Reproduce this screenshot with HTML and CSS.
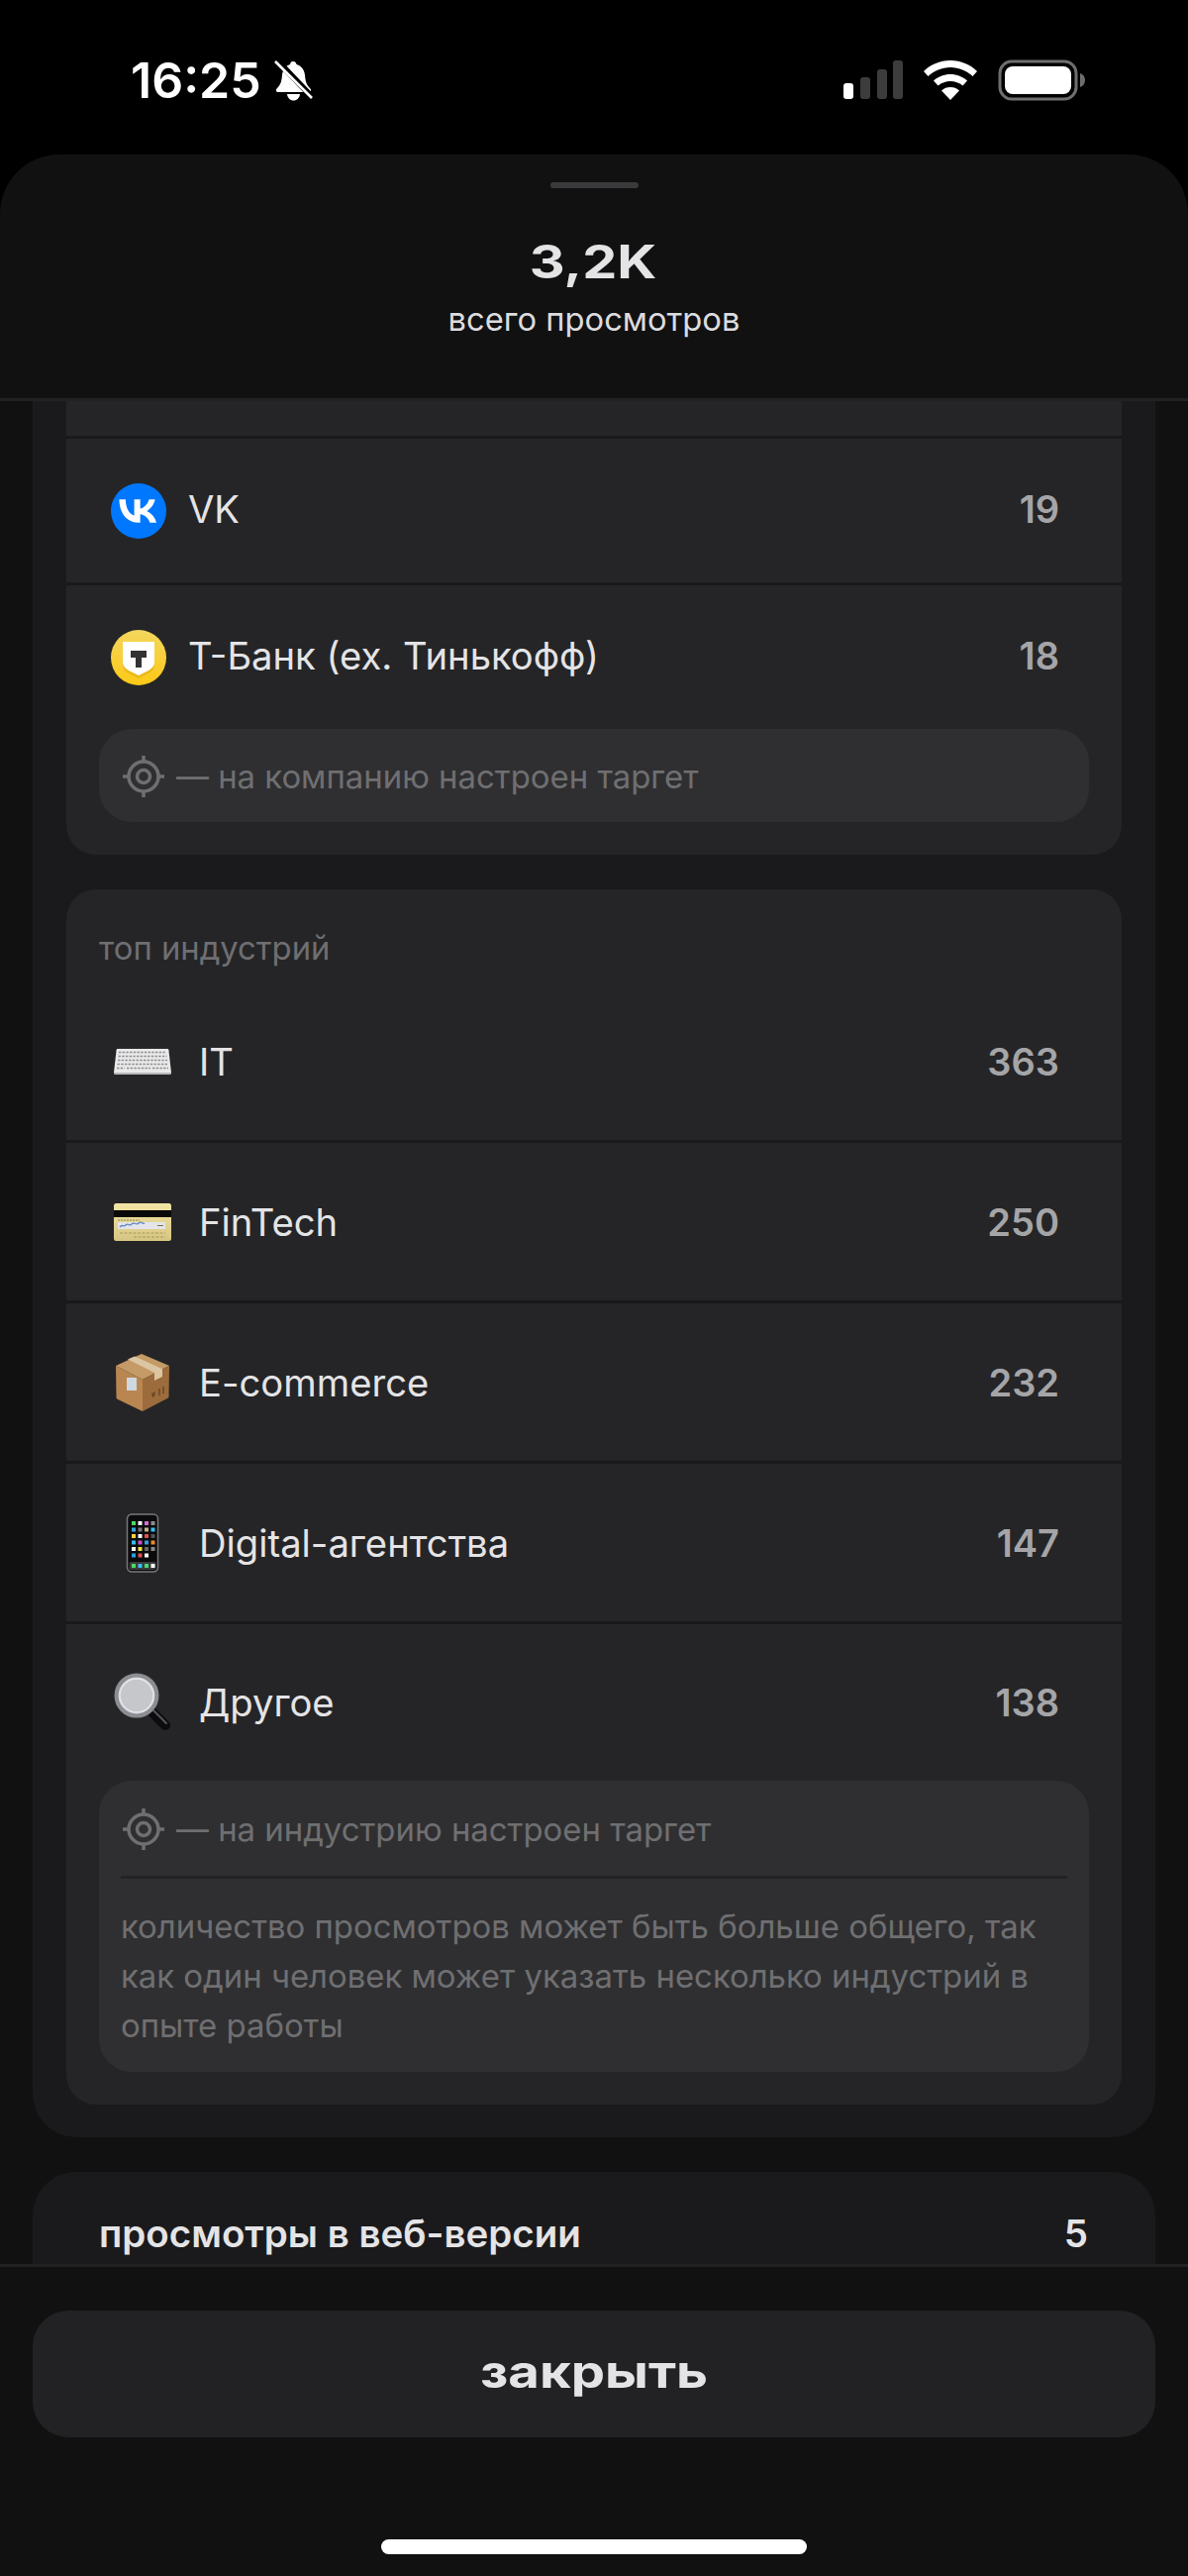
FILE: index.html
```html
<!DOCTYPE html>
<html lang="ru">
<head>
<meta charset="utf-8">
<title>просмотры</title>
<link rel="stylesheet" href="styles.css">
</head>
<body>

<div class="status">
  <div class="status-time">16:25</div>
  <svg class="bell" viewBox="0 0 40 44">
    <path fill="#fff" d="M19 2c2 0 3 1 3.500 3 5 1.500 8 5.500 8.500 11 .5 5 1 9 5 13 2 2 1 4-1 4H4c-2 0-3-2-1-4 4-4 4.500-8 5-13 .5-5.500 3.500-9.500 8-11 .5-2 1-3 3-3z"/>
    <path fill="#fff" d="M13 35h13c-.5 4-3 6.500-6.500 6.500S13.500 39 13 35z"/>
    <path stroke="#000" stroke-width="6" d="M1 -1L41 41"/>
    <path stroke="#fff" stroke-width="2.600" d="M1 2L38 39"/>
  </svg>
  <div class="status-right">
    <svg class="signal" viewBox="0 0 60 40">
      <rect x="0" y="23" width="10" height="16" rx="3" fill="#fff"/>
      <rect x="17" y="17" width="10" height="22" rx="3" fill="#3c3c3c"/>
      <rect x="34" y="9" width="10" height="30" rx="3" fill="#3c3c3c"/>
      <rect x="50" y="0" width="10" height="39" rx="3" fill="#3c3c3c"/>
    </svg>
    <svg class="wifi" viewBox="0 0 54 40">
      <path fill="#fff" d="M27 0c10.500 0 20 4 27 11l-4.500 5C43.500 10.500 35.500 7 27 7S10.500 10.500 4.500 16L0 11C7 4 16.500 0 27 0z"/>
      <path fill="#fff" d="M27 14c6.500 0 12.500 2.500 17 6.500l-4.500 5C36 22.500 31.500 21 27 21s-9 1.500-12.500 4.500L10 20.500C14.500 16.500 20.500 14 27 14z"/>
      <path fill="#fff" d="M27 27c3.500 0 6.500 1 9 3.500L27 40l-9-9.500c2.500-2.500 5.500-3.500 9-3.500z"/>
    </svg>
    <svg class="battery" viewBox="0 0 88 42">
      <rect x="2" y="2" width="77" height="38" rx="12" fill="none" stroke="#6e6e6e" stroke-width="3"/>
      <rect x="7" y="7" width="67" height="28" rx="8" fill="#fff"/>
      <path fill="#6e6e6e" d="M83 14c3 1 5 3.500 5 7s-2 6-5 7z"/>
    </svg>
  </div>
</div>

<div class="sheet">
  <div class="sheet-head">
    <div class="handle"></div>
    <div class="total"><span class="wide">3,2K</span></div>
    <div class="total-sub">всего просмотров</div>
  </div>

  <div class="sheet-scroll">
    <div class="outer-card">

      <div class="inner-card inner-card-cut">
        <div class="row-stub"></div>

        <div class="row">
          <svg class="logo" viewBox="0 0 56 56">
            <circle cx="28" cy="28" r="28" fill="#0077ff"/>
            <path fill="#fff" transform="translate(-1.100 -.9) scale(2.350)" d="M12.770 17.290c-5.470 0-8.590-3.750-8.720-9.990h2.740c.09 4.580 2.110 6.520 3.710 6.920V7.300h2.580v3.950c1.580-.17 3.240-1.970 3.800-3.950h2.580a7.620 7.620 0 0 1-3.510 4.980 7.900 7.900 0 0 1 4.110 5.010h-2.840c-.61-1.900-2.130-3.370-4.140-3.570v3.570h-.31z"/>
          </svg>
          <div class="row-name">VK</div>
          <div class="row-count">19</div>
        </div>

        <div class="row row-last">
          <svg class="logo" viewBox="0 0 56 56">
            <defs>
              <linearGradient id="tbank" x1="0" y1="0" x2="0" y2="1">
                <stop offset="0" stop-color="#f3d65e"/>
                <stop offset="1" stop-color="#fdc915"/>
              </linearGradient>
            </defs>
            <circle cx="28" cy="28" r="28" fill="url(#tbank)"/>
            <path fill="#d9a70c" d="M12 15h32v20c0 5-3 7-6 9l-10 5-10-5c-3-2-6-4-6-9z" opacity=".5"/>
            <path fill="#fff" d="M12 12h32v20c0 5-3 7-6 9l-10 5-10-5c-3-2-6-4-6-9z"/>
            <path fill="#333" d="M20 21h16v7h-5v10h-6V28h-5z"/>
          </svg>
          <div class="row-name">Т-Банк (ех. Тинькофф)</div>
          <div class="row-count">18</div>
        </div>

        <div class="note">
          <div class="note-row">
            <svg class="target" viewBox="0 0 42 42">
              <circle cx="21" cy="21" r="15" fill="none" stroke="#6f6f72" stroke-width="3.500"/>
              <circle cx="21" cy="21" r="6.500" fill="none" stroke="#6f6f72" stroke-width="3.500"/>
              <path stroke="#6f6f72" stroke-width="3.500" d="M21 0v7M21 35v7M0 21h7M35 21h7"/>
            </svg>
            <span>— на компанию настроен таргет</span>
          </div>
        </div>
      </div>

      <div class="inner-card">
        <div class="card-label">топ индустрий</div>

        <div class="row row-ind">
          <svg class="emoji" viewBox="0 0 58 60">
            <path fill="#e9e9ea" d="M4 17h50c.8 0 1.200.5 1.400 1.200L58 41c.1 1-.5 1.800-1.500 1.800h-55C.5 42.800-.1 42 0 41l2.600-22.800c.2-.7.600-1.200 1.400-1.200z"/>
            <path fill="none" stroke="#8d8d90" stroke-width="1.300" stroke-dasharray="2.400 1.300" d="M5 20.500h48M4.500 24.500h49M4 28.500h50M3.500 32.500h51M3 36.500h8M13 36.500h24M39 36.500h16"/>
            <path stroke="#b5b5b7" stroke-width="1.200" d="M0 41.500h58"/>
          </svg>
          <div class="row-name">IT</div>
          <div class="row-count">363</div>
        </div>

        <div class="row row-ind">
          <svg class="emoji" viewBox="0 0 58 60">
            <defs>
              <linearGradient id="card" x1="0" y1="0" x2="0" y2="1">
                <stop offset="0" stop-color="#f2e6a4"/>
                <stop offset="1" stop-color="#d6c582"/>
              </linearGradient>
            </defs>
            <rect x="0" y="11" width="58" height="38" rx="2.500" fill="url(#card)"/>
            <rect x="0" y="18" width="58" height="7" fill="#0a0a0a"/>
            <rect x="4" y="30" width="48" height="7" fill="#e4e4ea"/>
            <path fill="none" stroke="#5d88c4" stroke-width="1.300" d="M6 35c3-4 3 1 6-2s3 2 6-1 4 2 7-1 4 2 6 0"/>
            <path stroke="#7c7344" stroke-width="1" d="M44 33.500h6"/>
            <path stroke="#a99a5c" stroke-width="1.200" stroke-dasharray="3 1.500" d="M6 41h46M20 45h32"/>
            <path stroke="#7c7344" stroke-width=".800" stroke-dasharray="2 1" d="M4 28h22"/>
          </svg>
          <div class="row-name">FinTech</div>
          <div class="row-count">250</div>
        </div>

        <div class="row row-ind">
          <svg class="emoji" viewBox="0 0 58 60">
            <path fill="#c49a66" d="M28 1L56 13 29 27 2 13z"/>
            <path fill="#b98651" d="M2 13l27 14v32L4 47c-1-.5-1.500-1-1.500-2z"/>
            <path fill="#9c6c3c" d="M56 13L29 27v32l25-13c1-.5 1.500-1 1.500-2z"/>
            <path fill="#dcc5a2" d="M14 6.500l7-3 28 12.800v7.700l-8 4v-8z"/>
            <rect x="13" y="25" width="10" height="13" fill="#cfd8e0" transform="skewY(27 18 31)"/>
            <path stroke="#6d4826" stroke-width="1.500" d="M46 36v7M50 34v7"/>
            <path fill="#6d4826" d="M38 41l4-2-1 5-2 1z"/>
          </svg>
          <div class="row-name">E-commerce</div>
          <div class="row-count">232</div>
        </div>

        <div class="row row-ind">
          <svg class="emoji" viewBox="0 0 58 60">
            <rect x="13.500" y="1" width="31" height="58" rx="4.500" fill="#0b0b0c" stroke="#77787c" stroke-width="1.500"/>
            <g class="apps">
              <rect x="18" y="8" width="4" height="4" fill="#4cd964"/><rect x="24.500" y="8" width="4" height="4" fill="#fff"/><rect x="31" y="8" width="4" height="4" fill="#d66bd8"/><rect x="37.500" y="8" width="4" height="4" fill="#8e8e8e"/>
              <rect x="18" y="14.500" width="4" height="4" fill="#35a8e0"/><rect x="24.500" y="14.500" width="4" height="4" fill="#777"/><rect x="31" y="14.500" width="4" height="4" fill="#c9b48a"/><rect x="37.500" y="14.500" width="4" height="4" fill="#34c0f0"/>
              <rect x="18" y="21" width="4" height="4" fill="#f7d038"/><rect x="24.500" y="21" width="4" height="4" fill="#fff"/><rect x="31" y="21" width="4" height="4" fill="#e0504f"/><rect x="37.500" y="21" width="4" height="4" fill="#555"/>
              <rect x="18" y="27.500" width="4" height="4" fill="#34c0f0"/><rect x="24.500" y="27.500" width="4" height="4" fill="#c94fd0"/><rect x="31" y="27.500" width="4" height="4" fill="#2ea0e0"/><rect x="37.500" y="27.500" width="4" height="4" fill="#f08a24"/>
              <rect x="18" y="34" width="4" height="4" fill="#fff"/><rect x="24.500" y="34" width="4" height="4" fill="#f2e13a"/><rect x="31" y="34" width="4" height="4" fill="#666"/><rect x="37.500" y="34" width="4" height="4" fill="#888"/>
              <rect x="18" y="40.500" width="4" height="4" fill="#2a9fe0"/><rect x="24.500" y="40.500" width="4" height="4" fill="#e0504f"/><rect x="31" y="40.500" width="4" height="4" fill="#fff"/>
            </g>
            <rect x="15.500" y="49" width="27" height="8" rx="1.500" fill="#3a3b3e"/>
            <rect x="18" y="51" width="4" height="4" fill="#4cd964"/><rect x="24.500" y="51" width="4" height="4" fill="#34c0f0"/><rect x="31" y="51" width="4" height="4" fill="#4cd964"/><rect x="37.500" y="51" width="4" height="4" fill="#fff"/>
          </svg>
          <div class="row-name">Digital-агентства</div>
          <div class="row-count">147</div>
        </div>

        <div class="row row-ind row-last">
          <svg class="emoji" viewBox="0 0 58 60">
            <path stroke="#0c0c0e" stroke-width="10" stroke-linecap="round" d="M38 39L52 53"/>
            <path stroke="#55565a" stroke-width="2" stroke-linecap="round" d="M40 38L53 51"/>
            <path stroke="#77787c" stroke-width="5" d="M33 34L38 39"/>
            <circle cx="23" cy="23" r="20.500" fill="#c6c7cb" stroke="#8b8d92" stroke-width="4"/>
            <circle cx="23" cy="23" r="17" fill="none" stroke="#e6e7ea" stroke-width="1.500"/>
          </svg>
          <div class="row-name">Другое</div>
          <div class="row-count">138</div>
        </div>

        <div class="note note-tall">
          <div class="note-row">
            <svg class="target" viewBox="0 0 42 42">
              <circle cx="21" cy="21" r="15" fill="none" stroke="#6f6f72" stroke-width="3.500"/>
              <circle cx="21" cy="21" r="6.500" fill="none" stroke="#6f6f72" stroke-width="3.500"/>
              <path stroke="#6f6f72" stroke-width="3.500" d="M21 0v7M21 35v7M0 21h7M35 21h7"/>
            </svg>
            <span>— на индустрию настроен таргет</span>
          </div>
          <div class="note-text">количество просмотров может быть больше общего, так как один человек может указать несколько индустрий в опыте работы</div>
        </div>
      </div>
    </div>

    <div class="web-card">
      <div class="web-name">просмотры в веб-версии</div>
      <div class="web-count">5</div>
    </div>
  </div>

  <div class="sheet-foot">
    <div class="close-btn"><span class="wide">закрыть</span></div>
    <div class="home-bar"></div>
  </div>
</div>

</body>
</html>
```
FILE: styles.css
```css
* {
  box-sizing: border-box;
}

html, body {
  margin: 0;
  height: 2601px;
  background: #000;
  overflow: hidden;
}

body {
  display: flex;
  flex-direction: column;
  font-family: "Inter", "Liberation Sans", sans-serif;
  color: #e4e4e6;
}

/* status bar */
.status {
  height: 156px;
  flex: none;
  display: flex;
  align-items: flex-start;
  padding: 58px 104px 0 132px;
}
.status-time {
  font-size: 50px;
  line-height: 46px;
  font-weight: 600;
  color: #fff;
}
.bell {
  width: 40px;
  height: 44px;
  margin: 2px 0 0 13px;
}
.status-right {
  margin-left: auto;
  display: flex;
  align-items: flex-start;
  gap: 21px;
  padding-top: 3px;
}
.signal {
  width: 60px;
  height: 40px;
}
.wifi {
  width: 54px;
  height: 40px;
}
.battery {
  width: 88px;
  height: 42px;
  margin-top: -1px;
}

/* sheet */
.sheet {
  flex: 1;
  min-height: 0;
  display: flex;
  flex-direction: column;
  background: #111112;
  border-radius: 60px 60px 0 0;
}
.sheet-head {
  height: 249px;
  flex: none;
  border-bottom: 3px solid #222224;
  text-align: center;
  padding-top: 28px;
}
.handle {
  width: 89px;
  height: 6px;
  margin: 0 auto;
  border-radius: 3px;
  background: #3a3a3c;
}
.total {
  margin-top: 46px;
  font-size: 46px;
  line-height: 56px;
  font-weight: 700;
  margin-left: -2px;
}
.wide {
  display: inline-block;
  transform: scaleX(1.21);
}
.total-sub {
  margin-top: 8px;
  font-size: 32.700px;
  line-height: 44px;
  color: #dcdcde;
}

.sheet-scroll {
  flex: 1;
  min-height: 0;
  overflow: hidden;
  padding: 0 33px;
}
.outer-card {
  background: #1a1a1c;
  border-radius: 0 0 44px 44px;
  padding: 0 34px 33px;
}
.inner-card {
  background: #252527;
  border-radius: 30px;
  padding-bottom: 33px;
  margin-bottom: 35px;
}
.inner-card:last-child {
  margin-bottom: 0;
}
.inner-card-cut {
  border-radius: 0 0 30px 30px;
}
.inner-card-cut .row-name,
.inner-card-cut .row-count {
  margin-bottom: 3px;
}
.row-stub {
  height: 38px;
  border-bottom: 3px solid #19191b;
}
.row {
  height: 148px;
  display: flex;
  align-items: center;
  padding: 0 63px 0 45px;
  border-bottom: 3px solid #19191b;
}
.row-ind {
  height: 162px;
  padding-left: 48px;
}
.row-last {
  border-bottom: 0;
  height: 145px;
}
.row-ind.row-last {
  height: 158px;
}
.logo {
  width: 56px;
  height: 56px;
  flex: none;
  margin-right: 22px;
}
.emoji {
  width: 58px;
  height: 60px;
  flex: none;
  margin-right: 28px;
}
.row-name {
  font-size: 38.200px;
  line-height: 48px;
  color: #e4e4e6;
}
.row-count {
  margin-left: auto;
  font-size: 38px;
  line-height: 48px;
  font-weight: 600;
  color: #a5a5a8;
}
.card-label {
  padding: 40px 33px 16px;
  font-size: 32.800px;
  line-height: 38px;
  color: #6f6f72;
}

.note {
  margin: 0 33px;
  padding: 0 22px;
  background: #2f2f31;
  border-radius: 33px;
  font-size: 32.900px;
  color: #6f6f72;
}
.note-row {
  height: 94px;
  display: flex;
  align-items: center;
  gap: 12px;
  padding-top: 2px;
}
.target {
  width: 42px;
  height: 42px;
  flex: none;
  margin-left: 2px;
}
.note-tall .note-row {
  height: 99px;
  padding-top: 2px;
  border-bottom: 3px solid #232325;
}
.note-text {
  padding: 23px 0 22px;
  line-height: 50px;
}

.web-card {
  margin-top: 35px;
  height: 200px;
  background: #1a1a1c;
  border-radius: 44px 44px 0 0;
  display: flex;
  justify-content: space-between;
  padding: 40px 68px 0 67px;
  font-size: 38.500px;
  line-height: 44px;
  font-weight: 600;
  color: #e4e4e6;
}

.sheet-foot {
  flex: none;
  height: 315px;
  border-top: 3px solid #222224;
  padding: 44px 33px 0;
  background: #111112;
}
.close-btn {
  height: 128px;
  padding-bottom: 5px;
  border-radius: 36px;
  background: #222224;
  display: flex;
  align-items: center;
  justify-content: center;
  font-size: 45px;
  font-weight: 700;
  color: #e4e4e6;
}
.home-bar {
  width: 430px;
  height: 15px;
  margin: 103px auto 0;
  border-radius: 8px;
  background: #fff;
}
```
